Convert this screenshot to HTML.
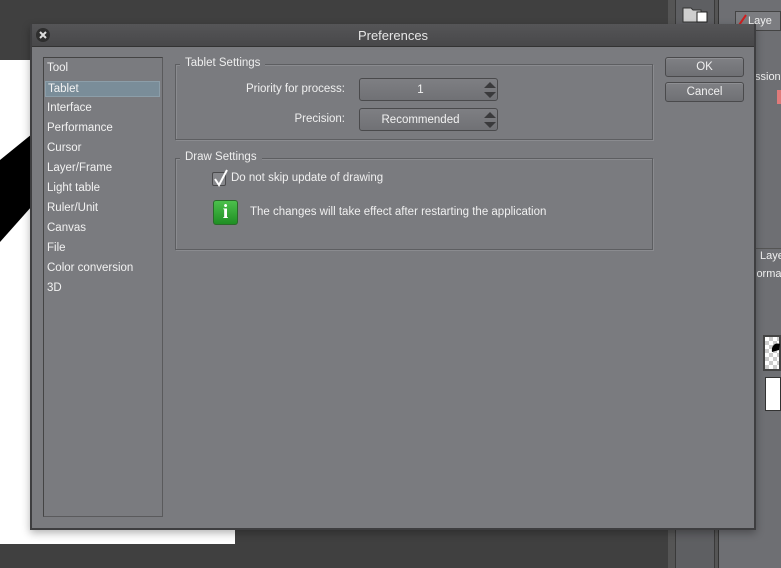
<!DOCTYPE html>
<html><head><meta charset="utf-8"><style>
*{margin:0;padding:0;box-sizing:border-box}
body{width:781px;height:568px;background:#404040;position:relative;overflow:hidden;font-family:"Liberation Sans",sans-serif;font-size:11.5px;color:#f0f0f0}
.a{position:absolute}
.dlg{left:30px;top:24px;width:726px;height:506px;background:#7a7b7f;border:2px solid #3e3e40;border-top:none;box-shadow:0 3px 8px rgba(0,0,0,.3)}
.title{left:0;top:0;width:722px;height:23px;background:linear-gradient(#555557,#48484a);border-bottom:1px solid #333;text-align:center;line-height:23px;font-size:13px;color:#e6e6e6}
.list{left:11px;top:33px;width:120px;height:460px;border:1px solid #444;border-right-color:#5a5a5c;border-bottom-color:#5a5a5c}
.list div{position:absolute;left:3px;color:#f2f2f2}
.grp{border:1px solid #5d5e61;box-shadow:inset 1px 1px 0 #8a8b8f,1px 1px 0 #8a8b8f}
.gl{background:#7a7b7f;padding:0 5px;color:#eee}
.spin{width:139px;height:23px;border:1px solid #4a4a4c;border-radius:3px;background:linear-gradient(#7e7f83,#707175);text-align:center;line-height:22px;color:#f2f2f2;padding-right:16px}
.btn{width:79px;height:20px;border:1px solid #4a4a4c;border-radius:3px;background:linear-gradient(#7f8084,#6f7074);text-align:center;line-height:19px;color:#f0f0f0;box-shadow:inset 0 1px 0 #8e8f93}
</style></head><body>
<div class="a" style="left:0;top:60px;width:235px;height:484px;background:#fff"></div>
<svg class="a" style="left:0;top:60px" width="235" height="200"><polygon points="0,100 32,74 32,146 0,182" fill="#000"/></svg>
<div class="a" style="left:668px;top:0;width:113px;height:568px;background:#555"></div>
<div class="a" style="left:675px;top:0;width:40px;height:568px;background:#5e5f62;border-left:1px solid #3a3a3a;border-right:1px solid #3a3a3a"></div>
<svg class="a" style="left:682px;top:4px" width="30" height="20"><path d="M1 4h8l2 2h8v12H1z" fill="#cfcfcf" stroke="#333"/><rect x="15" y="8" width="10" height="10" fill="#fff" stroke="#222"/></svg>
<div class="a" style="left:718px;top:0;width:63px;height:568px;background:#6e6f73;border-left:1px solid #333"></div>
<div class="a" style="left:735px;top:11px;width:46px;height:20px;background:#7c7d81;border:1px solid #444;line-height:18px;padding-left:12px;font-size:11px">Laye</div>
<svg class="a" style="left:736px;top:12px" width="12" height="18"><path d="M1 16L10 3" stroke="#d02020" stroke-width="2"/></svg>
<div class="a" style="left:755px;top:71px;color:#eee;font-size:11px">ssion</div>
<div class="a" style="left:777px;top:90px;width:4px;height:14px;background:#e07a7a"></div>
<div class="a" style="left:756px;top:248px;width:25px;height:16px;border-top:1px solid #555;font-size:11px;padding-left:4px;padding-top:1px">Laye</div>
<div class="a" style="left:754px;top:268px;font-size:11px">lorma</div>
<div class="a" style="left:763px;top:335px;width:18px;height:36px;background:repeating-conic-gradient(#ccc 0 25%,#fff 0 50%) 0 0/8px 8px;border:2px solid #444"></div>
<svg class="a" style="left:770px;top:340px" width="11" height="14"><path d="M2 12C1 6 5 2 10 4L9 10z" fill="#000"/></svg>
<div class="a" style="left:765px;top:377px;width:16px;height:34px;background:#fff;border:1px solid #333"></div>
<div class="a dlg">
 <div class="a title">Preferences</div>
 <svg class="a" style="left:3px;top:3px" width="16" height="16"><circle cx="8" cy="8" r="7" fill="#2e2e2e"/><path d="M5 5L11 11M11 5L5 11" stroke="#ddd" stroke-width="2"/></svg>
 <div class="a list">
  <div style="top:4px">Tool</div>
  <div style="top:23px;left:1px;width:115px;height:16px;background:#7a8d99;border:1px solid #8c9ea9;line-height:14px;padding-left:2px">Tablet</div>
  <div style="top:44px">Interface</div>
  <div style="top:64px">Performance</div>
  <div style="top:84px">Cursor</div>
  <div style="top:104px">Layer/Frame</div>
  <div style="top:124px">Light table</div>
  <div style="top:144px">Ruler/Unit</div>
  <div style="top:164px">Canvas</div>
  <div style="top:184px">File</div>
  <div style="top:204px">Color conversion</div>
  <div style="top:224px">3D</div>
 </div>
 <div class="a grp" style="left:143px;top:40px;width:478px;height:76px"></div>
 <div class="a gl" style="left:148px;top:33px">Tablet Settings</div>
 <div class="a" style="left:140px;top:59px;width:173px;text-align:right">Priority for process:</div>
 <div class="a spin" style="left:327px;top:54px">1</div>
 <div class="a" style="left:140px;top:89px;width:173px;text-align:right">Precision:</div>
 <div class="a spin" style="left:327px;top:84px">Recommended</div>
 <svg class="a" style="left:451px;top:57px" width="14" height="18"><path d="M1 7L7 1L13 7ZM1 11L13 11L7 17Z" fill="#3a3a3c"/></svg>
 <svg class="a" style="left:451px;top:87px" width="14" height="18"><path d="M1 7L7 1L13 7ZM1 11L13 11L7 17Z" fill="#3a3a3c"/></svg>
 <div class="a grp" style="left:143px;top:134px;width:478px;height:92px"></div>
 <div class="a gl" style="left:148px;top:127px">Draw Settings</div>
 <div class="a" style="left:180px;top:148px;width:14px;height:14px;border:1px solid #4a4a4c;border-radius:2px;background:#86878b"></div>
 <svg class="a" style="left:180px;top:144px" width="18" height="20"><path d="M3 11L7 17L15 2" stroke="#fff" stroke-width="2" fill="none"/></svg>
 <div class="a" style="left:199px;top:148px">Do not skip update of drawing</div>
 <div class="a" style="left:181px;top:176px;width:25px;height:25px;border-radius:3px;background:linear-gradient(#4cc04c,#1f8f24);border:1px solid #2a6a2a;color:#fff;font-family:'Liberation Serif',serif;font-weight:bold;font-size:20px;text-align:center;line-height:23px">i</div>
 <div class="a" style="left:218px;top:182px">The changes will take effect after restarting the application</div>
 <div class="a btn" style="left:633px;top:33px">OK</div>
 <div class="a btn" style="left:633px;top:58px">Cancel</div>
</div>
</body></html>
